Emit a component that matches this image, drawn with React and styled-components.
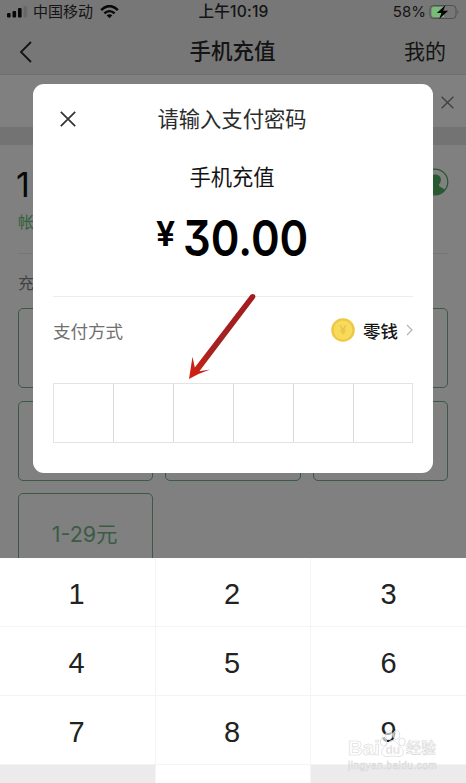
import React from "react";
import styled, { createGlobalStyle } from "styled-components";

const KEYS = ["1", "2", "3", "4", "5", "6", "7", "8", "9"];

function StatusBar() {
  return (
    <Status>
      <Carrier>
        <svg width="21" height="12" viewBox="0 0 21 12">
          <rect x="0" y="7" width="3.6" height="4.5" rx="1" fill="#080808" />
          <rect x="5.5" y="5" width="3.6" height="6.5" rx="1" fill="#080808" />
          <rect x="11" y="2" width="3.6" height="9.5" rx="1" fill="#080808" />
          <rect x="16.5" y="0" width="3.6" height="11.5" rx="1" fill="#686868" />
        </svg>
        <span>中国移动</span>
        <svg width="19" height="14" viewBox="0 0 19 14" fill="none" stroke="#080808">
          <path d="M1.2 5.1C6-.2 13-.2 17.8 5.1" strokeWidth="2.6" />
          <path d="M4.4 8.4C7.4 5.3 11.6 5.3 14.6 8.4" strokeWidth="2.4" />
          <path d="M9.5 13.2L6.7 10.2Q9.5 8.2 12.3 10.2Z" fill="#080808" stroke="none" />
        </svg>
      </Carrier>
      <Clock>上午10:19</Clock>
      <Battery>
        <span>58%</span>
        <svg width="31" height="16" viewBox="0 0 31 16">
          <rect x="1" y="1.5" width="26" height="13" rx="3.5" fill="none" stroke="#505050" />
          <path d="M4.5 3H15V13H4.5Q2.5 13 2.5 11V5Q2.5 3 4.5 3Z" fill="#77bd78" />
          <path d="M28.5 6Q30.5 8 28.5 10Z" fill="#505050" />
          <path d="M16.5 1L7.8 9H12.4L10.2 15L19.2 6.8H14.3Z" fill="#060606" />
        </svg>
      </Battery>
    </Status>
  );
}

function CloseIcon({ size, color }) {
  return (
    <svg width={size} height={size} viewBox="0 0 16 16" fill="none" stroke={color}>
      <path d="M.8 .8L15.2 15.2M15.2 .8L.8 15.2" strokeWidth="1.7" />
    </svg>
  );
}

function PayDialog() {
  return (
    <Dialog>
      <DialogHead>
        <CloseIcon size={16} color="#333" />
        <DialogTitle>请输入支付密码</DialogTitle>
      </DialogHead>
      <Product>手机充值</Product>
      <Amount>
        <Yen>¥</Yen>
        <Figure>30.00</Figure>
      </Amount>
      <Method>
        <MethodLabel>支付方式</MethodLabel>
        <Wallet>
          <svg width="24" height="24" viewBox="0 0 24 24">
            <circle cx="12" cy="12" r="11.8" fill="#efc742" />
            <circle cx="12" cy="12" r="9.4" fill="#f7dc5c" />
            <path
              d="M9 7.4L12 11.5L15 7.4M12 11.5V16.5M9.4 11.8H14.6M9.4 14H14.6"
              fill="none"
              stroke="#eac34a"
              strokeWidth="1.4"
            />
          </svg>
          <span>零钱</span>
          <svg width="7" height="12" viewBox="0 0 7 12" fill="none" stroke="#b3b3b3">
            <path d="M1 1L6 6L1 11" strokeWidth="1.2" />
          </svg>
        </Wallet>
      </Method>
      <Password>
        {[0, 1, 2, 3, 4, 5].map((i) => (
          <Cell key={i} />
        ))}
      </Password>
      <Arrow width="72" height="90" viewBox="0 0 72 90">
        <defs>
          <linearGradient id="red" x1="1" y1="0" x2="0" y2="1">
            <stop offset="0" stopColor="#a61b1f" />
            <stop offset=".65" stopColor="#a22320" />
            <stop offset="1" stopColor="#d91f10" />
          </linearGradient>
        </defs>
        <path
          d="M65.6 1.8Q67.6 .2 69.5 1.6Q71.2 3.2 69.8 5.3L14.4 78.2L25 76.4Q14 80 4 86L7.5 63.7L9.8 74.6Z"
          fill="url(#red)"
        />
      </Arrow>
    </Dialog>
  );
}

function Watermark() {
  return (
    <Mark>
      <MarkRow>
        <span>Bai</span>
        <Paw width="27" height="29" viewBox="0 0 27 29" fill="#fff" fillOpacity=".6" stroke="#dcdcdc" strokeWidth=".8">
          <ellipse cx="4.5" cy="13" rx="3.2" ry="4" />
          <ellipse cx="10" cy="6" rx="3.2" ry="4.4" />
          <ellipse cx="17.5" cy="6" rx="3.2" ry="4.4" />
          <ellipse cx="23" cy="13" rx="3.2" ry="4" />
          <path d="M13.5 11.5C18 11.5 19 17 23 19.5C26 23 24 28 19 27.5Q13.5 26.5 8 27.5C3 28 1 23 4 19.5C8 17 9 11.5 13.5 11.5Z" />
          <text x="6.5" y="25" fontSize="12" fontWeight="700" fill="#d2d2d2" stroke="none">du</text>
        </Paw>
        <MarkName>经验</MarkName>
      </MarkRow>
      <MarkUrl>jingyan.baidu.com</MarkUrl>
    </Mark>
  );
}

function App() {
  return (
    <Screen>
      <GlobalStyle />
      <Header>
        <StatusBar />
        <Nav>
          <svg width="13" height="22" viewBox="0 0 13 22" fill="none" stroke="#141414">
            <path d="M12 1L2 11L12 21" strokeWidth="1.8" />
          </svg>
          <NavTitle>手机充值</NavTitle>
          <span>我的</span>
        </Nav>
      </Header>
      <Notice>
        <CloseIcon size={13} color="#404040" />
      </Notice>
      <Band />
      <Account>
        <div>
          <Phone>1</Phone>
          <Owner>帐</Owner>
        </div>
        <svg width="28" height="28" viewBox="0 0 28 28">
          <circle cx="14" cy="14" r="12.8" fill="none" stroke="#27572f" strokeWidth="1.2" />
          <path
            d="M14 6.5C18 6.5 20.2 9 19.9 12Q19.6 15 18 16.4V18Q20.5 19.6 24 21.5Q20 26.7 14 26.7T4 21.5Q8 19.6 10 18V16.4Q8.4 15 8.1 12C7.8 9 10 6.5 14 6.5Z"
            fill="#275a30"
          />
        </svg>
      </Account>
      <Section>充</Section>
      <Cards>
        <Card />
        <Card />
        <Card />
        <Card />
        <Card />
        <Card />
        <Card>1-29元</Card>
      </Cards>
      <PayDialog />
      <Keypad>
        {KEYS.map((k) => (
          <Key key={k}>{k}</Key>
        ))}
        <Key $muted />
        <Key />
        <Key $muted />
      </Keypad>
      <Watermark />
    </Screen>
  );
}

const GlobalStyle = createGlobalStyle`
  * {
    box-sizing: border-box;
  }
  body {
    margin: 0;
  }
  svg {
    display: block;
    flex-shrink: 0;
  }
`;

const Screen = styled.div`
  position: relative;
  width: 466px;
  height: 783px;
  overflow: hidden;
  background: #808080;
  font-family: "Liberation Sans", "Noto Sans CJK SC", sans-serif;
  color: #141414;
`;

const Header = styled.header`
  height: 75px;
  background: #777;
  border-bottom: 1px solid #717171;
`;

const Status = styled.div`
  display: grid;
  grid-template-columns: 1fr auto 1fr;
  align-items: center;
  height: 23px;
  padding: 0 6px 0 7px;
  font-size: 15px;
  line-height: 23px;
`;

const Carrier = styled.div`
  display: flex;
  align-items: center;
  gap: 5px;
  span {
    margin-right: 2px;
  }
`;

const Clock = styled.div`
  font-family: Inter, "Noto Sans CJK SC", sans-serif;
  font-size: 15.6px;
  font-weight: 500;
  letter-spacing: 0.2px;
`;

const Battery = styled.div`
  display: flex;
  justify-content: flex-end;
  align-items: center;
  gap: 3px;
  font-family: Inter, sans-serif;
`;

const Nav = styled.nav`
  display: grid;
  grid-template-columns: 1fr auto 1fr;
  align-items: center;
  height: 52px;
  padding: 5px 20px 0 19px;
  font-size: 21px;
  line-height: 30px;
  span:last-child {
    text-align: right;
  }
`;

const NavTitle = styled.span`
  font-weight: 500;
  font-size: 21.5px;
`;

const Notice = styled.div`
  display: flex;
  justify-content: flex-end;
  align-items: center;
  height: 52px;
  padding: 3px 12px 0 0;
`;

const Band = styled.div`
  height: 18px;
  background: #737373;
`;

const Account = styled.div`
  display: flex;
  justify-content: space-between;
  height: 109px;
  margin: 0 18px;
  padding-top: 23px;
  border-bottom: 1px solid #757575;
  > svg {
    margin-right: -1px;
  }
`;

const Phone = styled.div`
  margin-left: -2px;
  font-family: Inter, sans-serif;
  font-size: 34px;
  line-height: 34px;
  color: #080808;
`;

const Owner = styled.div`
  margin-top: 9px;
  font-size: 16px;
  line-height: 24px;
  color: #34613c;
`;

const Section = styled.div`
  height: 54px;
  padding: 17px 18px 0;
  font-size: 16px;
  line-height: 26px;
  color: #434343;
`;

const Cards = styled.div`
  display: grid;
  grid-template-columns: repeat(3, 1fr);
  gap: 12.5px 12px;
  padding: 0 18px;
`;

const Card = styled.div`
  display: flex;
  justify-content: center;
  align-items: center;
  height: 80px;
  padding-right: 2px;
  padding-bottom: 2px;
  border: 1px solid #3a5a45;
  border-radius: 5px;
  font-family: Inter, "Noto Sans CJK SC", sans-serif;
  font-size: 21.5px;
  color: #3b5c44;
`;

const Dialog = styled.section`
  position: absolute;
  left: 33px;
  top: 84px;
  width: 400px;
  height: 389px;
  padding: 0 20px;
  border-radius: 11px;
  background: #fff;
`;

const DialogHead = styled.div`
  display: grid;
  grid-template-columns: 1fr auto 1fr;
  align-items: center;
  height: 70px;
  padding-left: 7px;
  padding-right: 9px;
`;

const DialogTitle = styled.h2`
  margin: 0;
  padding-top: 2px;
  font-size: 21.3px;
  font-weight: 400;
  line-height: 30px;
  color: #2c2c2c;
`;

const Product = styled.div`
  margin-top: 9px;
  padding-right: 2px;
  font-size: 21.3px;
  line-height: 30px;
  text-align: center;
`;

const Amount = styled.div`
  display: flex;
  justify-content: center;
  align-items: flex-start;
  gap: 8px;
  height: 104px;
  padding: 19px 2px 0 0;
  border-bottom: 1px solid #ededed;
  font-weight: 600;
  color: #000;
`;

const Yen = styled.span`
  font-family: Roboto, sans-serif;
  font-size: 35px;
  line-height: 46px;
`;

/* flat-topped 3, narrowed to a condensed numeral shape */
const Figure = styled.span`
  width: 125px;
  font-family: Inter, sans-serif;
  font-size: 50px;
  line-height: 52px;
  font-feature-settings: "cv09";
  white-space: nowrap;
  transform: scaleX(0.87);
  transform-origin: left center;
`;

const Method = styled.div`
  display: flex;
  justify-content: space-between;
  align-items: center;
  height: 66px;
  font-size: 17.5px;
`;

const MethodLabel = styled.span`
  color: #707070;
`;

const Wallet = styled.div`
  display: flex;
  align-items: center;
  gap: 8px;
  font-weight: 500;
`;

const Password = styled.div`
  display: grid;
  grid-template-columns: 59px repeat(4, 60px) 59px;
  height: 60px;
  margin-top: 20px;
  border: 1px solid #e3e3e3;
`;

const Cell = styled.div`
  & + & {
    border-left: 1px solid #dadada;
  }
`;

const Arrow = styled.svg`
  position: absolute;
  left: 152px;
  top: 209px;
`;

const Keypad = styled.div`
  position: absolute;
  left: 0;
  top: 558px;
  display: grid;
  grid-template-columns: 156px 155px 155px;
  grid-auto-rows: 69px;
  width: 466px;
  height: 225px;
  overflow: hidden;
  background: #fff;
`;

const Key = styled.div`
  display: flex;
  justify-content: center;
  align-items: center;
  padding-top: 4px;
  padding-right: 2px;
  border-right: 1px solid #f4f4f4;
  border-bottom: 1px solid #f4f4f4;
  background: ${(p) => (p.$muted ? "#ebebeb" : "#fff")};
  font-size: 29px;
  color: #222;
  &:nth-child(3n) {
    border-right: none;
    padding-right: 0;
  }
`;

const Mark = styled.div`
  position: absolute;
  left: 348px;
  top: 729px;
  width: 100px;
  font-weight: 700;
  color: rgba(255, 255, 255, 0.85);
  -webkit-text-stroke: 0.6px #d8d8d8;
`;

const MarkRow = styled.div`
  display: flex;
  align-items: flex-end;
  height: 29px;
  font-size: 20.5px;
  line-height: 20px;
  white-space: nowrap;
`;

const Paw = styled.svg`
  margin-left: -1px;
`;

const MarkName = styled.span`
  font-size: 15px;
  font-weight: 500;
`;

const MarkUrl = styled.div`
  margin-top: 2px;
  font-size: 10px;
  line-height: 12px;
  font-weight: 400;
  letter-spacing: 0.5px;
`;

export default App;
